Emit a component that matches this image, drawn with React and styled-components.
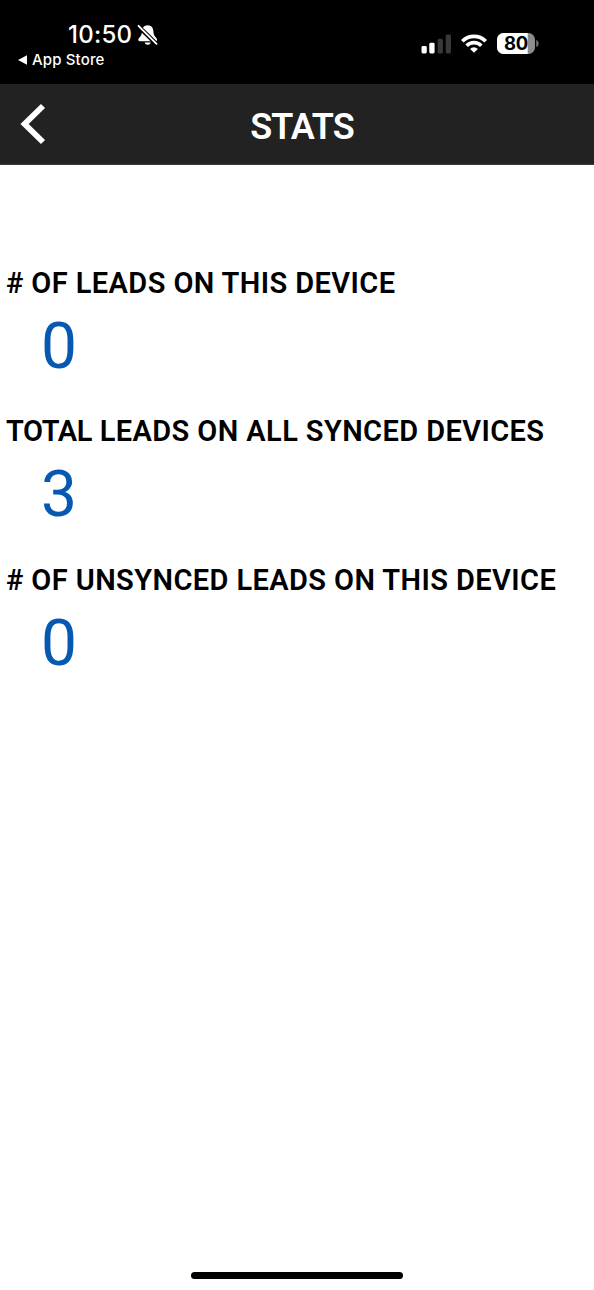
import React from 'react';
import styled, { createGlobalStyle } from 'styled-components';

const Global = createGlobalStyle`
  * { box-sizing: border-box; }
  body { margin: 0; background: #fff; }
`;
const Screen = styled.div`
  width: 594px; height: 1290px; display: flex; flex-direction: column;
  background: #fff; font-family: Roboto, sans-serif; overflow: hidden;
`;
const StatusBar = styled.header`
  height: 84px; flex: none; background: #000; color: #fff;
  display: flex; justify-content: space-between; padding: 20px 55px 0 17px;
  font-family: Inter, sans-serif;
`;
const Clock = styled.div`
  display: flex; align-items: center; gap: 5px; height: 29px; padding-left: 51px;
  font-size: 24px; font-weight: 500; letter-spacing: 0.25px;
`;
const BackToApp = styled.div`
  display: flex; align-items: center; gap: 5px; height: 21px; padding-left: 1px;
  font-size: 15px; font-weight: 500; letter-spacing: 0.15px;
`;
const Indicators = styled.div`
  display: flex; align-items: center; gap: 10px; height: 47px;
`;
const NavBar = styled.nav`
  height: 81px; flex: none; background: #222; color: #fff; border-bottom: 1px solid #3c3a3a;
  display: grid; grid-template-columns: 67px 1fr 57px; align-items: center;
`;
const BackButton = styled.button`
  border: 0; background: none; padding: 0 0 0 20px; height: 42px; display: flex;
`;
const Title = styled.h1`
  margin: 0; padding-top: 5px; text-align: center; font-size: 36px; line-height: 42px; font-weight: 600;
  letter-spacing: -0.9px;
`;
const Stats = styled.main`
  flex: 1; padding: 98px 6px 0;
`;
const Stat = styled.section`
  height: 148.4px;
`;
const Label = styled.h2`
  margin: 0; font-size: 29px; line-height: 40px; font-weight: 650; white-space: nowrap;
  letter-spacing: 0.41px;
`;
const Word = styled.span`
  letter-spacing: ${p => p.$tracking}px;
`;
const Value = styled.div`
  padding-left: 35px; font-size: 64px; line-height: 87px; color: #0758b0;
`;
const HomeIndicator = styled.div`
  width: 212px; height: 7px; border-radius: 4px; background: #000; margin: 0 auto 11px;
`;

const stats = [
  { label: '# OF LEADS ON THIS DEVICE', value: 0 },
  { label: <><Word $tracking={-0.4}>TOTAL</Word> LEADS ON ALL SYNCED DEVICES</>, value: 3 },
  { label: '# OF UNSYNCED LEADS ON THIS DEVICE', value: 0 },
];

const MutedBell = () => (
  <svg width="21" height="22" viewBox="0 0 21 22">
    <path fill="#fff" d="M10.7 1.2C7 1.2 5 4 5 7.6c0 5-3.7 6-3.7 8.2 0 1 .5 1.4 1.5 1.4h15.8c1 0 1.5-.4 1.5-1.4 0-2.2-3.7-3.2-3.7-8.2 0-3.6-2-6.4-5.7-6.4ZM7.7 18.4h6c-.5 3-5.5 3-6 0Z" />
    <path d="M-.5.5 21 21.5" stroke="#000" strokeWidth="4.4" />
    <path d="M1.5 1.8 19.5 19.8" stroke="#fff" strokeWidth="1.9" strokeLinecap="round" />
  </svg>
);
const Signal = () => (
  <svg width="30" height="20" viewBox="0 0 30 20" fill="#fff">
    <rect x=".5" y="12" width="5.3" height="7.5" rx="1.4" />
    <rect x="8.3" y="8.7" width="5.3" height="10.8" rx="1.4" />
    <rect x="16.6" y="4.8" width="5.3" height="14.7" rx="1.4" opacity=".22" />
    <rect x="24.7" y=".6" width="5.3" height="18.9" rx="1.4" opacity=".22" />
  </svg>
);
const Wifi = () => (
  <svg width="26" height="19" viewBox="0 0 26 19" fill="none" stroke="#fff" strokeWidth="3.7">
    <path d="M1.3 7.2a16.7 16.7 0 0 1 23.4 0M5.7 11.7a10.4 10.4 0 0 1 14.6 0" />
    <path d="M13 18.8 9.1 14.9a5.6 5.6 0 0 1 7.8 0Z" fill="#fff" stroke="none" />
  </svg>
);
const Battery = () => (
  <svg width="42" height="21" viewBox="0 0 42 21">
    <clipPath id="cell"><rect width="38" height="21" rx="6.5" /></clipPath>
    <g clipPath="url(#cell)"><rect width="38" height="21" fill="#8c8c8c" /><rect width="30.7" height="21" fill="#fff" /></g>
    <path d="M39.3 7c3 1 3 6 0 7Z" fill="#777" />
    <text x="19" y="17" textAnchor="middle" fontFamily="Inter" fontSize="18.5" fontWeight="650" letterSpacing="-.3">80</text>
  </svg>
);

export default function App() {
  return (
    <Screen>
      <Global />
      <StatusBar>
        <div>
          <Clock>10:50<MutedBell /></Clock>
          <BackToApp>
            <svg width="9" height="10" viewBox="0 0 9 10"><path d="M0 5 9 .3v9.4Z" fill="#fff" /></svg>
            App Store
          </BackToApp>
        </div>
        <Indicators><Signal /><Wifi /><Battery /></Indicators>
      </StatusBar>
      <NavBar>
        <BackButton aria-label="Back">
          <svg width="27" height="42" viewBox="0 0 27 42"><path d="M23 3 4.6 21 23 39" fill="none" stroke="#fff" strokeWidth="5.8" /></svg>
        </BackButton>
        <Title>STATS</Title>
      </NavBar>
      <Stats>
        {stats.map((s, i) => (
          <Stat key={i}><Label>{s.label}</Label><Value>{s.value}</Value></Stat>
        ))}
      </Stats>
      <HomeIndicator />
    </Screen>
  );
}
